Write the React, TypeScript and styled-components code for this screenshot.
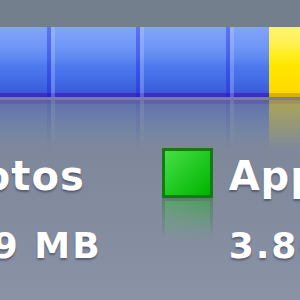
import React from 'react';
import styled, { createGlobalStyle } from 'styled-components';

const Global = createGlobalStyle`
  html, body { margin: 0; padding: 0; }
  body {
    width: 300px;
    height: 300px;
    overflow: hidden;
    background: linear-gradient(to bottom, #737e8d 0px, #76818f 90px, #7e889a 150px, #8a92a5 300px);
    font-family: "DejaVu Sans", "Liberation Sans", sans-serif;
  }
`;

const Stage = styled.div`
  width: 300px;
  height: 300px;
  overflow: hidden;
  padding-top: 27px;
  box-sizing: border-box;
`;

const Bar = styled.div`
  display: flex;
  height: 70px;
  width: 440px;
  margin-left: -40px;
  -webkit-box-reflect: below 3px linear-gradient(to bottom, transparent 28%, rgba(0, 0, 0, 0.4));
`;

const blue = `linear-gradient(to bottom,
  #82a5fb 0%, #789df9 15%, #6e94f6 30%, #5e88f2 45%, #4f7aee 55%,
  #4570e8 70%, #3f63e0 85%, #3c58da 94%, #3f2fc6 94.5%, #3a2ac0 100%)`;

const yellow = `linear-gradient(to bottom,
  #fff46c 0%, #fff15a 20%, #ffed20 40%, #ffe600 55%, #ffdd00 80%,
  #ffd700 94%, #dbb400 94.5%, #d4ad00 100%)`;

const Segment = styled.div<{ $w?: number; $kind: 'blue' | 'yellow'; $lead?: boolean; $trail?: boolean }>`
  position: relative;
  flex: ${(p) => (p.$w ? `0 0 ${p.$w}px` : '1 1 auto')};
  background: ${(p) => (p.$kind === 'blue' ? blue : yellow)};
  &::before {
    content: '';
    display: ${(p) => (p.$lead ? 'block' : 'none')};
    position: absolute;
    left: 0;
    top: 0;
    bottom: 0;
    width: 4px;
    background: rgba(200, 215, 255, 0.28);
  }
  &::after {
    content: '';
    display: ${(p) => (p.$trail ? 'block' : 'none')};
    position: absolute;
    right: 0;
    top: 0;
    bottom: 0;
    width: 4px;
    background: rgba(20, 20, 230, 0.35);
  }
`;

const Legend = styled.div`
  display: flex;
  align-items: flex-start;
  gap: 60px;
  margin-top: 51px;
  margin-left: -144px;
`;

const Item = styled.div`
  display: flex;
  align-items: flex-start;
  gap: 16px;
  flex: none;
`;

const Swatch = styled.div<{ $from: string; $to: string; $edge: string }>`
  flex: none;
  width: 51px;
  height: 50px;
  box-sizing: border-box;
  border: 3px solid ${(p) => p.$edge};
  background: linear-gradient(135deg, ${(p) => p.$from}, ${(p) => p.$to});
  -webkit-box-reflect: below 0 linear-gradient(to bottom, transparent 15%, rgba(0, 0, 0, 0.4));
`;

const Texts = styled.div`
  display: flex;
  flex-direction: column;
  color: #ffffff;
  font-weight: bold;
  text-shadow: 0 2px 2px rgba(30, 30, 60, 0.45);
  white-space: nowrap;
`;

const Label = styled.div`
  font-size: 40px;
  letter-spacing: 1px;
  line-height: 46px;
  margin-top: 5px;
`;

const Size = styled.div`
  font-size: 36px;
  letter-spacing: 2px;
  line-height: 46px;
  margin-top: 24px;
`;

export default function App() {
  return (
    <>
      <Global />
      <Stage>
        <Bar>
          <Segment $kind="blue" $w={91} $trail />
          <Segment $kind="blue" $w={89} $lead $trail />
          <Segment $kind="blue" $w={90} $lead $trail />
          <Segment $kind="blue" $w={39} $lead />
          <Segment $kind="yellow" />
        </Bar>
        <Legend>
          <Item>
            <Swatch $from="#7aa0ff" $to="#3a5cdc" $edge="#2a3aa0" />
            <Texts>
              <Label>Photos</Label>
              <Size>12.9 MB</Size>
            </Texts>
          </Item>
          <Item>
            <Swatch $from="#46de46" $to="#00b400" $edge="#157a15" />
            <Texts>
              <Label>Apps</Label>
              <Size>3.80 GB</Size>
            </Texts>
          </Item>
        </Legend>
      </Stage>
    </>
  );
}
